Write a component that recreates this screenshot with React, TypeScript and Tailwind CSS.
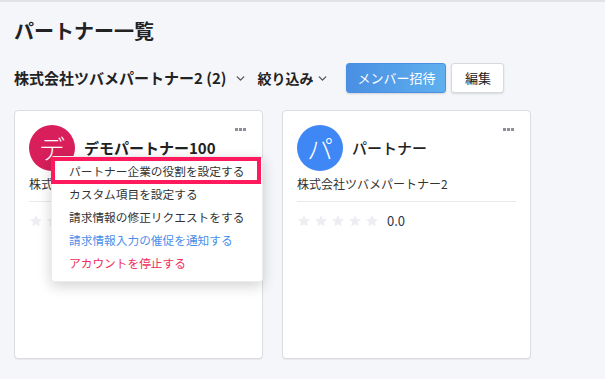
import { ChevronDown } from "lucide-react"

function Stars() {
  return (
    <div className="flex items-center gap-[3px]">
      {[0, 1, 2, 3, 4].map((i) => (
        <svg key={i} width="14" height="14" viewBox="0 0 24 24">
          <path
            d="M12 1.8l3.1 6.6 7.2.8-5.4 4.9 1.5 7.1L12 17.6l-6.4 3.6 1.5-7.1L1.7 9.2l7.2-.8z"
            fill="#eceef1"
          />
        </svg>
      ))}
    </div>
  )
}

function Dots() {
  return (
    <div className="absolute right-[16px] top-[17px] flex gap-[1px]">
      <span className="w-[3px] h-[3px] bg-[#8a8f99]" />
      <span className="w-[3px] h-[3px] bg-[#8a8f99]" />
      <span className="w-[3px] h-[3px] bg-[#8a8f99]" />
    </div>
  )
}

function Card({
  letter,
  color,
  name,
  bold,
  children,
}: {
  letter: string
  color: string
  name: string
  bold?: boolean
  children?: React.ReactNode
}) {
  return (
    <div className="relative w-[249px] h-[249px] bg-white border border-[#dcdde0] rounded-[4px] shadow-[0_1px_1px_rgba(0,0,0,0.06)] px-[14px] pt-[14px]">
      <Dots />
      <div className="flex items-center gap-[9px]">
        <div
          className={`w-[46px] h-[46px] rounded-full ${color} flex items-center justify-center text-white text-[26px] font-light leading-none`}
        >
          {letter}
        </div>
        <div className={`text-[15px] text-[#222] ${bold ? "font-bold" : "font-medium"}`}>{name}</div>
      </div>
      <div className="mt-[4px] text-[12px] text-[#333] leading-[18px]">株式会社ツバメパートナー2</div>
      <div className="mt-[8px] border-t border-[#e8e9eb]" />
      <div className="mt-[9px] flex items-center gap-[8px]">
        <Stars />
        <span className="text-[13px] text-[#2d3748]">0.0</span>
      </div>
      {children}
    </div>
  )
}

function Menu() {
  return (
    <div className="absolute left-[36px] top-[45px] w-[212px] h-[126px] bg-white rounded-[3px] shadow-[0_4px_14px_rgba(0,0,0,0.18)] border border-[#ececec] pt-[2px] text-[11.7px] z-10">
      <div className="absolute left-[-1px] top-[0px] w-[210px] h-[27px] border-[4px] border-[#ff1a5e]" />
      <div className="h-[23px] flex items-center pl-[17px] text-[#333]">パートナー企業の役割を設定する</div>
      <div className="h-[23px] flex items-center pl-[17px] text-[#333]">カスタム項目を設定する</div>
      <div className="h-[23px] flex items-center pl-[17px] text-[#333]">請求情報の修正リクエストをする</div>
      <div className="h-[23px] flex items-center pl-[17px] text-[#4a8fe7]">請求情報入力の催促を通知する</div>
      <div className="h-[23px] flex items-center pl-[17px] text-[#ef2e5b]">アカウントを停止する</div>
    </div>
  )
}

export default function App() {
  return (
    <div
      className="w-[605px] h-[379px] bg-[#f5f6fa] border-t-2 border-[#e2e3e7] overflow-hidden"
      style={{ fontFamily: '"Noto Sans CJK JP", "Noto Sans", sans-serif' }}
    >
      <div className="px-[14px]">
        <h1 className="mt-[17px] text-[20px] font-bold text-[#222] leading-[24px]">パートナー一覧</h1>
        <div className="mt-[20px] flex items-center h-[30px]">
          <span className="text-[15px] font-bold text-[#222]">株式会社ツバメパートナー2 (2)</span>
          <ChevronDown size={13} strokeWidth={2.5} className="ml-[8px] text-[#555]" />
          <span className="ml-[10px] text-[14px] font-bold text-[#222]">絞り込み</span>
          <ChevronDown size={13} strokeWidth={2.5} className="ml-[3px] text-[#555]" />
          <button className="ml-[17px] w-[100px] h-[30px] rounded-[3px] bg-gradient-to-r from-[#4a8fe3] to-[#5fb0ee] border border-[#4a90e2] text-white text-[13px] shadow-[0_1px_2px_rgba(0,0,0,0.15)]">
            メンバー招待
          </button>
          <button className="ml-[5px] w-[53px] h-[30px] rounded-[3px] bg-white border border-[#d8d9dc] text-[#222] text-[13px] shadow-[0_1px_2px_rgba(0,0,0,0.12)]">
            編集
          </button>
        </div>
        <div className="mt-[17px] flex gap-[19px]">
          <Card letter="デ" color="bg-[#d81e5b]" name="デモパートナー100" bold>
            <Menu />
          </Card>
          <Card letter="パ" color="bg-[#3f87f5]" name="パートナー" />
        </div>
      </div>
    </div>
  )
}
